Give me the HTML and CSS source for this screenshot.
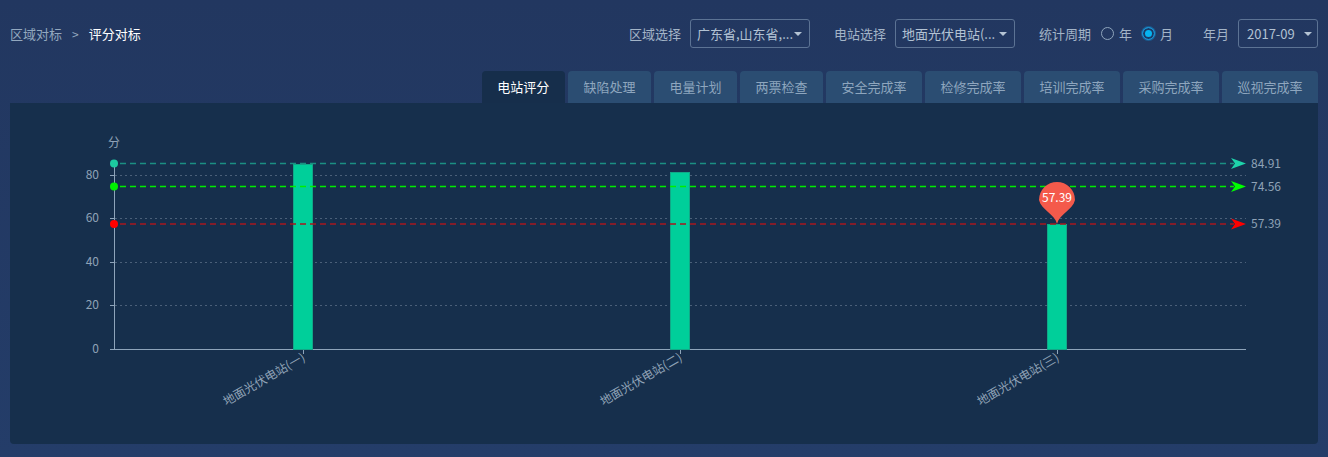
FILE: index.html
```html
<!DOCTYPE html>
<html lang="zh">
<head>
<meta charset="utf-8">
<title>评分对标</title>
<link rel="stylesheet" href="styles.css">
</head>
<body>
<div class="header">
  <div class="crumb">
    <span class="crumb-parent">区域对标</span>
    <span class="crumb-sep">&gt;</span>
    <span class="crumb-current">评分对标</span>
  </div>
  <div class="filters">
    <span class="flabel">区域选择</span>
    <div class="select sel-wide"><span class="sel-text">广东省,山东省,...</span><span class="caret"></span></div>
    <span class="flabel gap-l">电站选择</span>
    <div class="select sel-wide"><span class="sel-text">地面光伏电站(...</span><span class="caret"></span></div>
    <span class="flabel gap-l">统计周期</span>
    <span class="radio"></span><span class="rlabel">年</span>
    <span class="radio checked"></span><span class="rlabel">月</span>
    <span class="flabel gap-xl">年月</span>
    <div class="select sel-narrow"><span class="sel-text">2017-09</span><span class="caret"></span></div>
  </div>
</div>
<div class="tabs">
  <div class="tab active">电站评分</div>
  <div class="tab">缺陷处理</div>
  <div class="tab">电量计划</div>
  <div class="tab">两票检查</div>
  <div class="tab">安全完成率</div>
  <div class="tab">检修完成率</div>
  <div class="tab">培训完成率</div>
  <div class="tab">采购完成率</div>
  <div class="tab">巡视完成率</div>
</div>
<div class="panel">
  <svg class="chart" width="1308" height="341" viewBox="10 103 1308 341" xmlns="http://www.w3.org/2000/svg">
    <text class="axis-text" x="114" y="147" text-anchor="middle">分</text>
    <g class="grid">
      <line x1="115" y1="175.5" x2="1246" y2="175.5"/>
      <line x1="115" y1="218.5" x2="1246" y2="218.5"/>
      <line x1="115" y1="262.5" x2="1246" y2="262.5"/>
      <line x1="115" y1="305.5" x2="1246" y2="305.5"/>
    </g>
    <g class="axis">
      <line x1="114.5" y1="163" x2="114.5" y2="350"/>
      <line x1="114" y1="349.5" x2="1246" y2="349.5"/>
      <line x1="110" y1="175.5" x2="114" y2="175.5"/>
      <line x1="110" y1="218.5" x2="114" y2="218.5"/>
      <line x1="110" y1="262.5" x2="114" y2="262.5"/>
      <line x1="110" y1="305.5" x2="114" y2="305.5"/>
      <line x1="110" y1="349.5" x2="114" y2="349.5"/>
      <line x1="303.5" y1="349" x2="303.5" y2="354"/>
      <line x1="680.5" y1="349" x2="680.5" y2="354"/>
      <line x1="1057.5" y1="349" x2="1057.5" y2="354"/>
    </g>
    <g class="axis-text" text-anchor="end">
      <text x="99" y="179">80</text>
      <text x="99" y="222">60</text>
      <text x="99" y="266">40</text>
      <text x="99" y="309">20</text>
      <text x="99" y="353">0</text>
    </g>
    <g class="bars">
      <rect x="293.5" y="164.5" width="19" height="185"/>
      <rect x="670.5" y="172.5" width="19" height="177"/>
      <rect x="1047.5" y="224.5" width="19" height="125"/>
    </g>
    <line class="ml ml-teal" x1="120" y1="163.5" x2="1234" y2="163.5"/>
    <line class="ml ml-green" x1="120" y1="186.5" x2="1234" y2="186.5"/>
    <line class="ml ml-red" x1="120" y1="224" x2="1234" y2="224"/>
    <circle cx="114" cy="163.5" r="4" fill="#1cc9a0"/>
    <circle cx="114" cy="186.5" r="4" fill="#00f000"/>
    <circle cx="114" cy="224" r="4" fill="#ff0000"/>
    <polygon points="1246,163.5 1231,158 1235,163.5 1231,169" fill="#1ed3aa"/>
    <polygon points="1246,186.5 1231,181 1235,186.5 1231,192" fill="#00ff00"/>
    <polygon points="1246,224 1231,218.5 1235,224 1231,229.5" fill="#ff0000"/>
    <g class="axis-text">
      <text x="1251" y="168">84.91</text>
      <text x="1251" y="191">74.56</text>
      <text x="1251" y="228">57.39</text>
    </g>
    <path class="pin" d="M1057 224 C1055 214 1041 210 1039 200 A18 18 0 1 1 1075 200 C1073 210 1059 214 1057 224 Z"/>
    <text class="pin-text" x="1057" y="202" text-anchor="middle">57.39</text>
    <g class="axis-text xlab" text-anchor="end">
      <text transform="translate(306 360) rotate(-30)">地面光伏电站(一)</text>
      <text transform="translate(683 360) rotate(-30)">地面光伏电站(二)</text>
      <text transform="translate(1060 360) rotate(-30)">地面光伏电站(三)</text>
    </g>
  </svg>
</div>
</body>
</html>
```
FILE: styles.css
```css
html, body {
  margin: 0;
  padding: 0;
}
body {
  width: 1328px;
  height: 457px;
  overflow: hidden;
  background: linear-gradient(#223760, #243d69);
  font-family: "Noto Sans CJK SC", "Noto Sans", sans-serif;
  font-size: 13px;
  color: #9fb1c5;
}
.header {
  height: 67px;
  display: flex;
  align-items: center;
  justify-content: space-between;
  padding: 0 10px;
}
.crumb {
  display: flex;
  align-items: center;
}
.crumb-parent {
  color: #93a8bf;
}
.crumb-sep {
  margin: 0 10px 0 10px;
  color: #93a8bf;
  font-size: 12px;
}
.crumb-current {
  color: #ffffff;
}
.filters {
  display: flex;
  align-items: center;
}
.flabel {
  color: #a3b4c7;
  margin-right: 9px;
}
.gap-l {
  margin-left: 24px;
}
.gap-xl {
  margin-left: 21px;
}
.select {
  height: 27px;
  border: 1px solid #5c7394;
  border-radius: 3px;
  display: flex;
  align-items: center;
  justify-content: space-between;
  padding: 0 7px 0 6px;
  box-sizing: content-box;
  color: #b2c2d3;
}
.sel-wide {
  width: 105px;
}
.sel-narrow {
  width: 65px;
  padding-left: 8px;
  padding-right: 5px;
}
.sel-text {
  white-space: nowrap;
  overflow: hidden;
}
.caret {
  width: 0;
  height: 0;
  border-left: 4px solid transparent;
  border-right: 4px solid transparent;
  border-top: 4px solid #b5c4d4;
}
.radio {
  width: 11px;
  height: 11px;
  border: 1px solid #8fa5bc;
  border-radius: 50%;
  margin-left: 1px;
  margin-right: 5px;
  box-sizing: content-box;
}
.radio.checked {
  border-color: #1f8fd0;
  background: #06b4f0;
  box-shadow: 0 0 0 1px #1a5d92, inset 0 0 0 2px #1b3a66;
}
.rlabel {
  color: #a3b4c7;
  margin-right: 9px;
}
.tabs {
  display: flex;
  justify-content: flex-end;
  gap: 3px;
  margin-top: 4px;
  padding-right: 10px;
  height: 32px;
}
.tab {
  height: 32px;
  line-height: 32px;
  padding: 0 15.5px;
  background: #2b4d72;
  color: #8ea6be;
  border-radius: 4px 4px 0 0;
  white-space: nowrap;
}
.tab.active {
  background: #162e4b;
  color: #ffffff;
}
.panel {
  margin: 0 10px;
  height: 341px;
  background: #162f4c;
  border-radius: 0 0 4px 4px;
}
.chart {
  display: block;
}
.axis-text {
  font-family: "Noto Sans CJK SC", "Noto Sans", sans-serif;
  font-size: 12px;
  fill: #8fa2b6;
}
.grid line {
  stroke: #4b6079;
  stroke-width: 1;
  stroke-dasharray: 2 3;
}
.axis line {
  stroke: #8ea4ba;
  stroke-width: 1;
}
.bars rect {
  fill: #00cf9a;
  stroke: #11a887;
  stroke-width: 1;
}
.ml {
  stroke-dasharray: 6 4;
}
.ml-teal {
  stroke: #1b8f82;
  stroke-width: 1.6;
}
.ml-green {
  stroke: #00ee00;
  stroke-width: 1.4;
}
.ml-red {
  stroke: #a8191f;
  stroke-width: 1.6;
}
.pin {
  fill: #f45a4b;
}
.pin-text {
  font-family: "Noto Sans CJK SC", "Noto Sans", sans-serif;
  font-size: 12px;
  fill: #ffffff;
}
```
